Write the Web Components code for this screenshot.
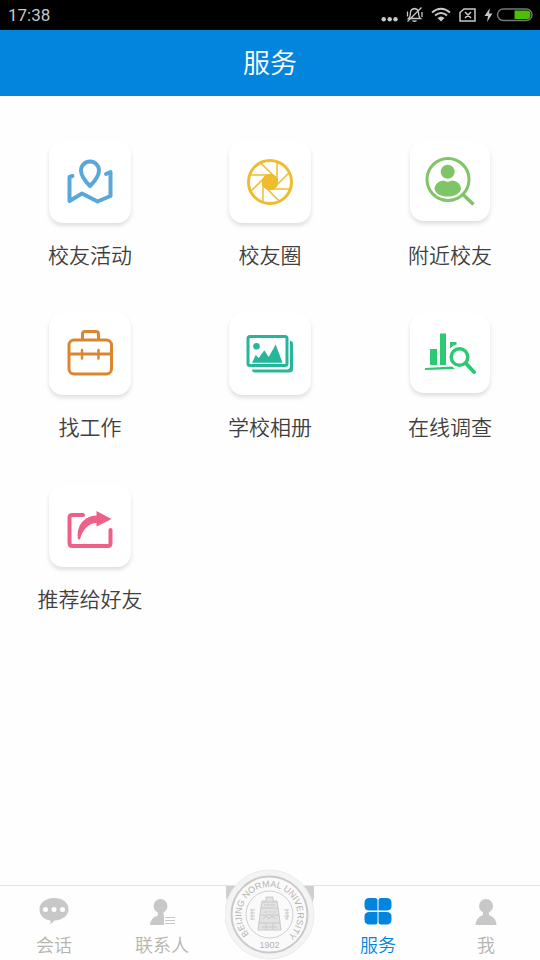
<!DOCTYPE html>
<html lang="zh-CN">
<head>
<meta charset="UTF-8">
<meta name="viewport" content="width=device-width, initial-scale=1.0">
<title>服务</title>
<style>
    body {
        margin: 0;
        background: #fefefe;
        font-family: "Noto Sans CJK SC", sans-serif;
    }
</style>
</head>
<body>
<service-app>
    <status-bar slot="top" time="17:38"></status-bar>
    <title-bar slot="top">服务</title-bar>

    <service-tile label="校友活动">
        <svg viewBox="0 0 82 82" fill="none" stroke="#58a8dc" stroke-width="4" stroke-linecap="round" stroke-linejoin="round">
            <path d="M23.500 35L20.500 36V60L33 52.500L48.500 60.500L61.500 55V31L57 33"/>
            <path d="M41 45C38 42 32 35 32 29.500A9 9 0 0 1 50 29.500C50 35 44 42 41 45Z"/>
        </svg>
    </service-tile>
    <service-tile label="校友圈">
        <svg viewBox="0 0 82 82" fill="none" stroke="#eebc2c" stroke-width="1.500">
            <circle cx="41" cy="41" r="21.500" stroke-width="3"/>
            <circle cx="41" cy="41" r="7.500" fill="#eebc2c"/>
            <g transform="translate(41 41)">
                <path d="M7-20V3"/>
                <path d="M7-20V3" transform="rotate(45)"/>
                <path d="M7-20V3" transform="rotate(90)"/>
                <path d="M7-20V3" transform="rotate(135)"/>
                <path d="M7-20V3" transform="rotate(180)"/>
                <path d="M7-20V3" transform="rotate(225)"/>
                <path d="M7-20V3" transform="rotate(270)"/>
                <path d="M7-20V3" transform="rotate(315)"/>
            </g>
        </svg>
    </service-tile>
    <service-tile label="附近校友" compact>
        <svg viewBox="0 0 80 80" fill="#80c468">
            <circle cx="38" cy="38.500" r="21" fill="none" stroke="#80c468" stroke-width="3"/>
            <circle cx="37.700" cy="30.700" r="7"/>
            <path d="M24.500 48C24.500 43 29 40 34 39.500Q37.700 42 41.500 39.500C47 40 51 43 51 48C50 53 44 55.500 37.700 55.500S25.500 53 24.500 48Z"/>
            <path d="M52 52.500L63.500 63.500" stroke="#80c468" stroke-width="3.500"/>
        </svg>
    </service-tile>
    <service-tile label="找工作">
        <svg viewBox="0 0 82 82" fill="none" stroke="#dc8530" stroke-width="3">
            <rect x="20" y="27" width="42.500" height="34" rx="5"/>
            <path d="M33.500 27V21Q33.500 18.500 36 18.500H47Q49.500 18.500 49.500 21V27M20 41H62.500"/>
            <path d="M33 37V45.500M49.500 37V45.500" stroke-linecap="round" stroke-width="2.500"/>
        </svg>
    </service-tile>
    <service-tile label="学校相册">
        <svg viewBox="0 0 82 82" fill="#26b79a">
            <rect x="19" y="23.500" width="39" height="29" rx="2" fill="none" stroke="#26b79a" stroke-width="3"/>
            <path d="M61 27.500Q64 28 64 31V56Q64 59.500 60 59.500H26Q23 59.500 23 56.500H58Q61 56.500 61 53Z"/>
            <circle cx="27.500" cy="33.300" r="3.300"/>
            <path d="M23 49.700L26.700 42L29.700 45L35.300 37.300L39.700 44L46.700 31.500L53.500 49.700Z"/>
        </svg>
    </service-tile>
    <service-tile label="在线调查" compact>
        <svg viewBox="0 0 80 80" fill="#2dc873">
            <path d="M20 36H27V52H20ZM30 20.500H36V52H30ZM40 29H46.500V31.500Q43 32 40 35.500Z"/>
            <path d="M15 55L42 53.500L45 56L15 57Z"/>
            <circle cx="49.500" cy="44" r="8.300" fill="none" stroke="#2dc873" stroke-width="3.500"/>
            <path d="M56 50.500L64 59" stroke="#2dc873" stroke-width="4" stroke-linecap="round"/>
        </svg>
    </service-tile>
    <service-tile label="推荐给好友">
        <svg viewBox="0 0 82 82" fill="#ee6088">
            <path d="M34 30H23Q20.500 30 20.500 33V58Q20.500 61 23 61H59Q61.500 61 61.500 58V45" fill="none" stroke="#ee6088" stroke-width="4" stroke-linecap="round"/>
            <path d="M47.500 26L62.500 34L47.500 41.500V38C40 38 34 44 31 54Q30 55 29 54C27 41 35 31 47.500 30.500Z"/>
        </svg>
    </service-tile>

    <tab-bar slot="bottom">
        <tab-item label="会话">
            <svg viewBox="0 0 30 30">
                <path fill="currentColor" d="M15 2C23.500 2 29.500 6.500 29.500 13S24 24 15.500 24.500Q13.500 27 10.500 28.500Q12 26.500 11.500 24.500C4.500 23.500.5 19 .5 13S6.500 2 15 2Z"/>
                <circle cx="6.500" cy="13.500" r="2.500" fill="#fff"/>
                <circle cx="15" cy="13.500" r="2.500" fill="#fff"/>
                <circle cx="23.500" cy="13.500" r="2.500" fill="#fff"/>
            </svg>
        </tab-item>
        <tab-item label="联系人">
            <svg viewBox="0 0 30 30" fill="currentColor">
                <circle cx="13.500" cy="10" r="7"/>
                <path d="M10.500 15H16.500V19H17V29H3Q3.500 21.500 11 19.500Z"/>
                <path d="M18 21H28V22H18ZM18 24H28V25H18ZM18 27H28V28H18Z"/>
            </svg>
        </tab-item>
        <school-seal></school-seal>
        <tab-item label="服务" active>
            <svg viewBox="0 0 30 30" fill="currentColor">
                <path d="M6.500 2H12Q14.500 2 14.500 4.500V14.500H6.500Q1.500 14.500 1.500 10V7Q1.500 2 6.500 2ZM23.500 2H18Q15.500 2 15.500 4.500V14.500H23.500Q28.500 14.500 28.500 10V7Q28.500 2 23.500 2ZM6.500 28.500H12Q14.500 28.500 14.500 26V16H6.500Q1.500 16 1.500 20.500V23.500Q1.500 28.500 6.500 28.500ZM23.500 28.500H18Q15.500 28.500 15.500 26V16H23.500Q28.500 16 28.500 20.500V23.500Q28.500 28.500 23.500 28.500Z"/>
            </svg>
        </tab-item>
        <tab-item label="我">
            <svg viewBox="0 0 30 30" fill="currentColor">
                <circle cx="15" cy="10" r="7"/>
                <path d="M12 15H18V19Q25 21.500 25.500 29H4.500Q5 21.500 12 19Z"/>
            </svg>
        </tab-item>
    </tab-bar>
</service-app>

<script>
    // 把模板挂到元素的 shadow root 上
    function render(host, html) {
        const template = document.createElement('template');
        template.innerHTML = html;
        host.attachShadow({ mode: 'open' }).appendChild(template.content.cloneNode(true));
    }

    class ServiceApp extends HTMLElement {
        constructor() {
            super();
            render(this, `
                <style>
                    :host {
                        display: flex;
                        flex-direction: column;
                        min-height: 100vh;
                    }

                    main {
                        flex: 1;
                        display: grid;
                        grid-template-columns: repeat(3, 1fr);
                        align-content: start;
                        row-gap: 44px;
                        padding: 45px 0;
                    }
                </style>
                <header><slot name="top"></slot></header>
                <main><slot></slot></main>
                <slot name="bottom"></slot>
            `);
        }
    }

    class StatusBar extends HTMLElement {
        constructor() {
            super();
            render(this, `
                <style>
                    :host {
                        display: flex;
                        align-items: center;
                        justify-content: space-between;
                        height: 30px;
                        padding: 0 4px 0 8px;
                        background: #000;
                        color: #c8c8c8;
                        font: 17px/30px Roboto, sans-serif;
                    }
                </style>
                <span>${this.getAttribute('time')}</span>
                <svg width="156" height="30" viewBox="0 0 156 30" fill="none" stroke="currentColor" stroke-width="1.500">
                    <g fill="currentColor" stroke="none">
                        <circle cx="3.700" cy="19.300" r="2.200"/>
                        <circle cx="9.700" cy="19.300" r="2.200"/>
                        <circle cx="15.500" cy="19.300" r="2.200"/>
                    </g>
                    <!-- 静音 -->
                    <path d="M28.500 18.500Q30.500 17 30.500 12Q31 9 34.500 8.500Q38 9 38.500 12Q38.500 17 40.500 18.500ZM32.500 20.500Q34.500 22 36.500 20.500M41.500 7.500L27.500 21.500M27.500 11.500V16.500M42 12V17" stroke-width="1.300"/>
                    <!-- WiFi -->
                    <path d="M52 12.500Q61 5 70 12.500M55 15.500Q61 10.500 67 15.500" stroke-width="2"/>
                    <path d="M57.500 18Q61 15 64.500 18L61 21.500Z" fill="currentColor" stroke="none"/>
                    <!-- SIM 卡 -->
                    <path d="M84 9H95V21H80V12.500ZM85 12L91 18M91 12L85 18"/>
                    <path d="M110 8L104.500 16H108L107 22L112.500 13.500H109Z" fill="currentColor" stroke="none"/>
                    <!-- 电池 -->
                    <rect x="117.500" y="9" width="34.500" height="11.500" rx="5.700" stroke="#777"/>
                    <path d="M134.500 10.500H147Q150.500 10.500 150.500 14.800T147 19H134.500Z" fill="#4cbd0a" stroke="none"/>
                </svg>
            `);
        }
    }

    class TitleBar extends HTMLElement {
        constructor() {
            super();
            render(this, `
                <style>
                    :host {
                        display: block;
                        padding-bottom: 2px;
                        background: #0485dd;
                        color: #fff;
                    }

                    h1 {
                        margin: 0;
                        font-size: 27px;
                        font-weight: 350;
                        line-height: 64px;
                        text-align: center;
                    }
                </style>
                <h1><slot></slot></h1>
            `);
        }
    }

    class ServiceTile extends HTMLElement {
        constructor() {
            super();
            render(this, `
                <style>
                    :host {
                        display: flex;
                        justify-content: center;
                    }

                    a {
                        display: flex;
                        flex-direction: column;
                        align-items: center;
                        color: #404040;
                        text-decoration: none;
                    }

                    .card {
                        width: 82px;
                        height: 82px;
                        border-radius: 14px;
                        background: #fff;
                        box-shadow: 0 3px 4px rgba(0, 0, 0, 0.12);
                    }

                    :host([compact]) .card {
                        width: 80px;
                        height: 80px;
                        margin-bottom: 2px;
                    }

                    ::slotted(svg) {
                        display: block;
                        width: 100%;
                        height: 100%;
                    }

                    .label {
                        margin-top: 16px;
                        font-size: 21px;
                        font-weight: 350;
                        line-height: 30px;
                    }
                </style>
                <a href="#">
                    <div class="card"><slot></slot></div>
                    <span class="label">${this.getAttribute('label')}</span>
                </a>
            `);
        }
    }

    class TabBar extends HTMLElement {
        constructor() {
            super();
            render(this, `
                <style>
                    :host {
                        display: block;
                        border-top: 1px solid #e4e4e4;
                    }

                    nav {
                        display: grid;
                        grid-template-columns: repeat(5, 1fr);
                    }
                </style>
                <nav><slot></slot></nav>
            `);
        }
    }

    class TabItem extends HTMLElement {
        constructor() {
            super();
            render(this, `
                <style>
                    :host {
                        display: block;
                        color: #c8c8c8;
                    }

                    a {
                        display: flex;
                        flex-direction: column;
                        align-items: center;
                        gap: 6px;
                        padding: 10px 0 4px;
                        color: inherit;
                        text-decoration: none;
                    }

                    ::slotted(svg) {
                        width: 30px;
                        height: 30px;
                    }

                    .label {
                        color: #b4b4ae;
                        font-size: 18px;
                        font-weight: 350;
                        line-height: 24px;
                    }

                    :host([active]),
                    :host([active]) .label {
                        color: #0485dd;
                    }
                </style>
                <a href="#">
                    <slot></slot>
                    <span class="label">${this.getAttribute('label')}</span>
                </a>
            `);
        }
    }

    // 中间的校徽，顶部高出标签栏
    class SchoolSeal extends HTMLElement {
        constructor() {
            super();
            render(this, `
                <style>
                    :host {
                        display: flex;
                        justify-content: center;
                        margin-top: -17px;
                    }

                    a {
                        display: block;
                        height: 91px;
                    }

                    text {
                        font-family: "Liberation Sans", sans-serif;
                        font-size: 9px;
                    }
                </style>
                <a href="#">
                    <svg width="90" height="91" viewBox="0 0 90 91" fill="none" stroke="#cacaca">
                        <path d="M1 17H89V28L85 44H5L1 28Z" fill="#cfcfd2" stroke="none"/>
                        <circle cx="44.500" cy="45.500" r="44.500" fill="#f4f4f4" stroke="#ececec"/>
                        <circle cx="44.500" cy="45.500" r="38" fill="#fafafa" stroke-width="2"/>
                        <circle cx="44.500" cy="45.500" r="23.500" stroke="#d0d0d0"/>
                        <path id="ring" d="M24 65A28 28 0 1 1 65 65" stroke="none"/>
                        <g fill="#b4b4b4" stroke="none">
                            <text><textPath href="#ring">BEIJING NORMAL UNIVERSITY</textPath></text>
                            <text x="44.500" y="79" text-anchor="middle">1902</text>
                        </g>
                        <!-- 木铎 -->
                        <path d="M41 28H48V32H52L53 38L56 61H33L36 38L37 32H41Z" fill="#e2e2e2"/>
                        <path d="M37 33H52M36 39H53M35 46H54M34 54H55M39 36H50M38 50L41 47L44 50L47 47L51 50M39 43H42M44 43H46M48 43H51M37 58H52M41 54V61M48 54V61"/>
                        <path d="M25 41H30M25 44H30M25 47H30M25 50H30M27 40V51M59 41H64M60 44H64M59 47H64M62 40V51M60 50L64 47"/>
                    </svg>
                </a>
            `);
        }
    }

    customElements.define('service-app', ServiceApp);
    customElements.define('status-bar', StatusBar);
    customElements.define('title-bar', TitleBar);
    customElements.define('service-tile', ServiceTile);
    customElements.define('tab-bar', TabBar);
    customElements.define('tab-item', TabItem);
    customElements.define('school-seal', SchoolSeal);
</script>
</body>
</html>
